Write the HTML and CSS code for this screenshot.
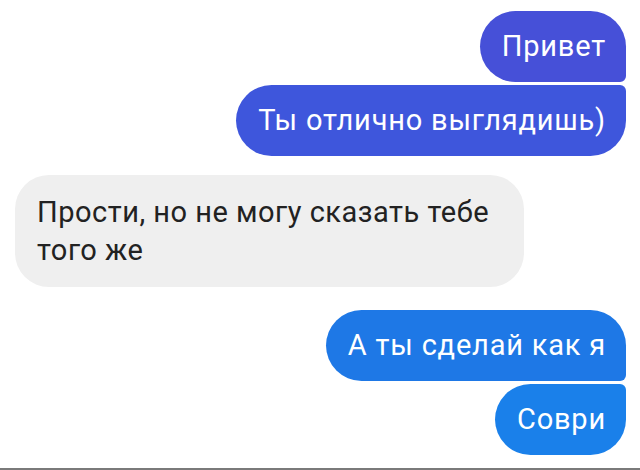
FILE: index.html
```html
<!DOCTYPE html>
<html lang="ru">
<head>
    <meta charset="UTF-8">
    <meta name="viewport" content="width=device-width, initial-scale=1.0">
    <title>Чат</title>
    <link rel="stylesheet" href="styles.css">
</head>
<body>
    <!-- Conversation -->
    <div class="chat">
        <div class="msg out first c1">Привет</div>
        <div class="msg out last c2">Ты отлично выглядишь)</div>
        <div class="msg in">Прости, но не могу сказать тебе того же</div>
        <div class="msg out first c3">А ты сделай как я</div>
        <div class="msg out last c4">Соври</div>
    </div>
    <div class="bottom-line"></div>
</body>
</html>
```

FILE: styles.css
```css
body {
    margin: 0;
    padding: 0;
    background: #fff;
    font-family: Roboto, "Noto Sans", sans-serif;
    height: 470px;
    overflow: hidden;
    position: relative;
}
.chat {
    display: flex;
    flex-direction: column;
    align-items: flex-end;
    padding: 11px 14px 0 15px;
}
.msg {
    font-size: 29px;
    letter-spacing: 0.8px;
    line-height: 38px;
    padding: 16px 20px 17px 22px;
    border-radius: 36px;
    color: #fff;
}
.out.first {
    border-bottom-right-radius: 6px;
}
.out.last {
    border-top-right-radius: 6px;
    margin-top: 3px;
}
.c1 { background: #4650d8; }
.c2 { background: #3e56dc; }
.c3 { background: #1e78e6; margin-top: 23px; }
.c4 { background: #1a80ea; }
.msg.in {
    align-self: flex-start;
    background: #efefef;
    color: #222;
    letter-spacing: 0.5px;
    max-width: 466px;
    padding: 18px 21px 18px 22px;
    border-radius: 34px;
    margin-top: 19px;
}
.bottom-line {
    position: absolute;
    left: 0;
    right: 0;
    bottom: 0;
    height: 2px;
    background: #7a7a7a;
}
```
